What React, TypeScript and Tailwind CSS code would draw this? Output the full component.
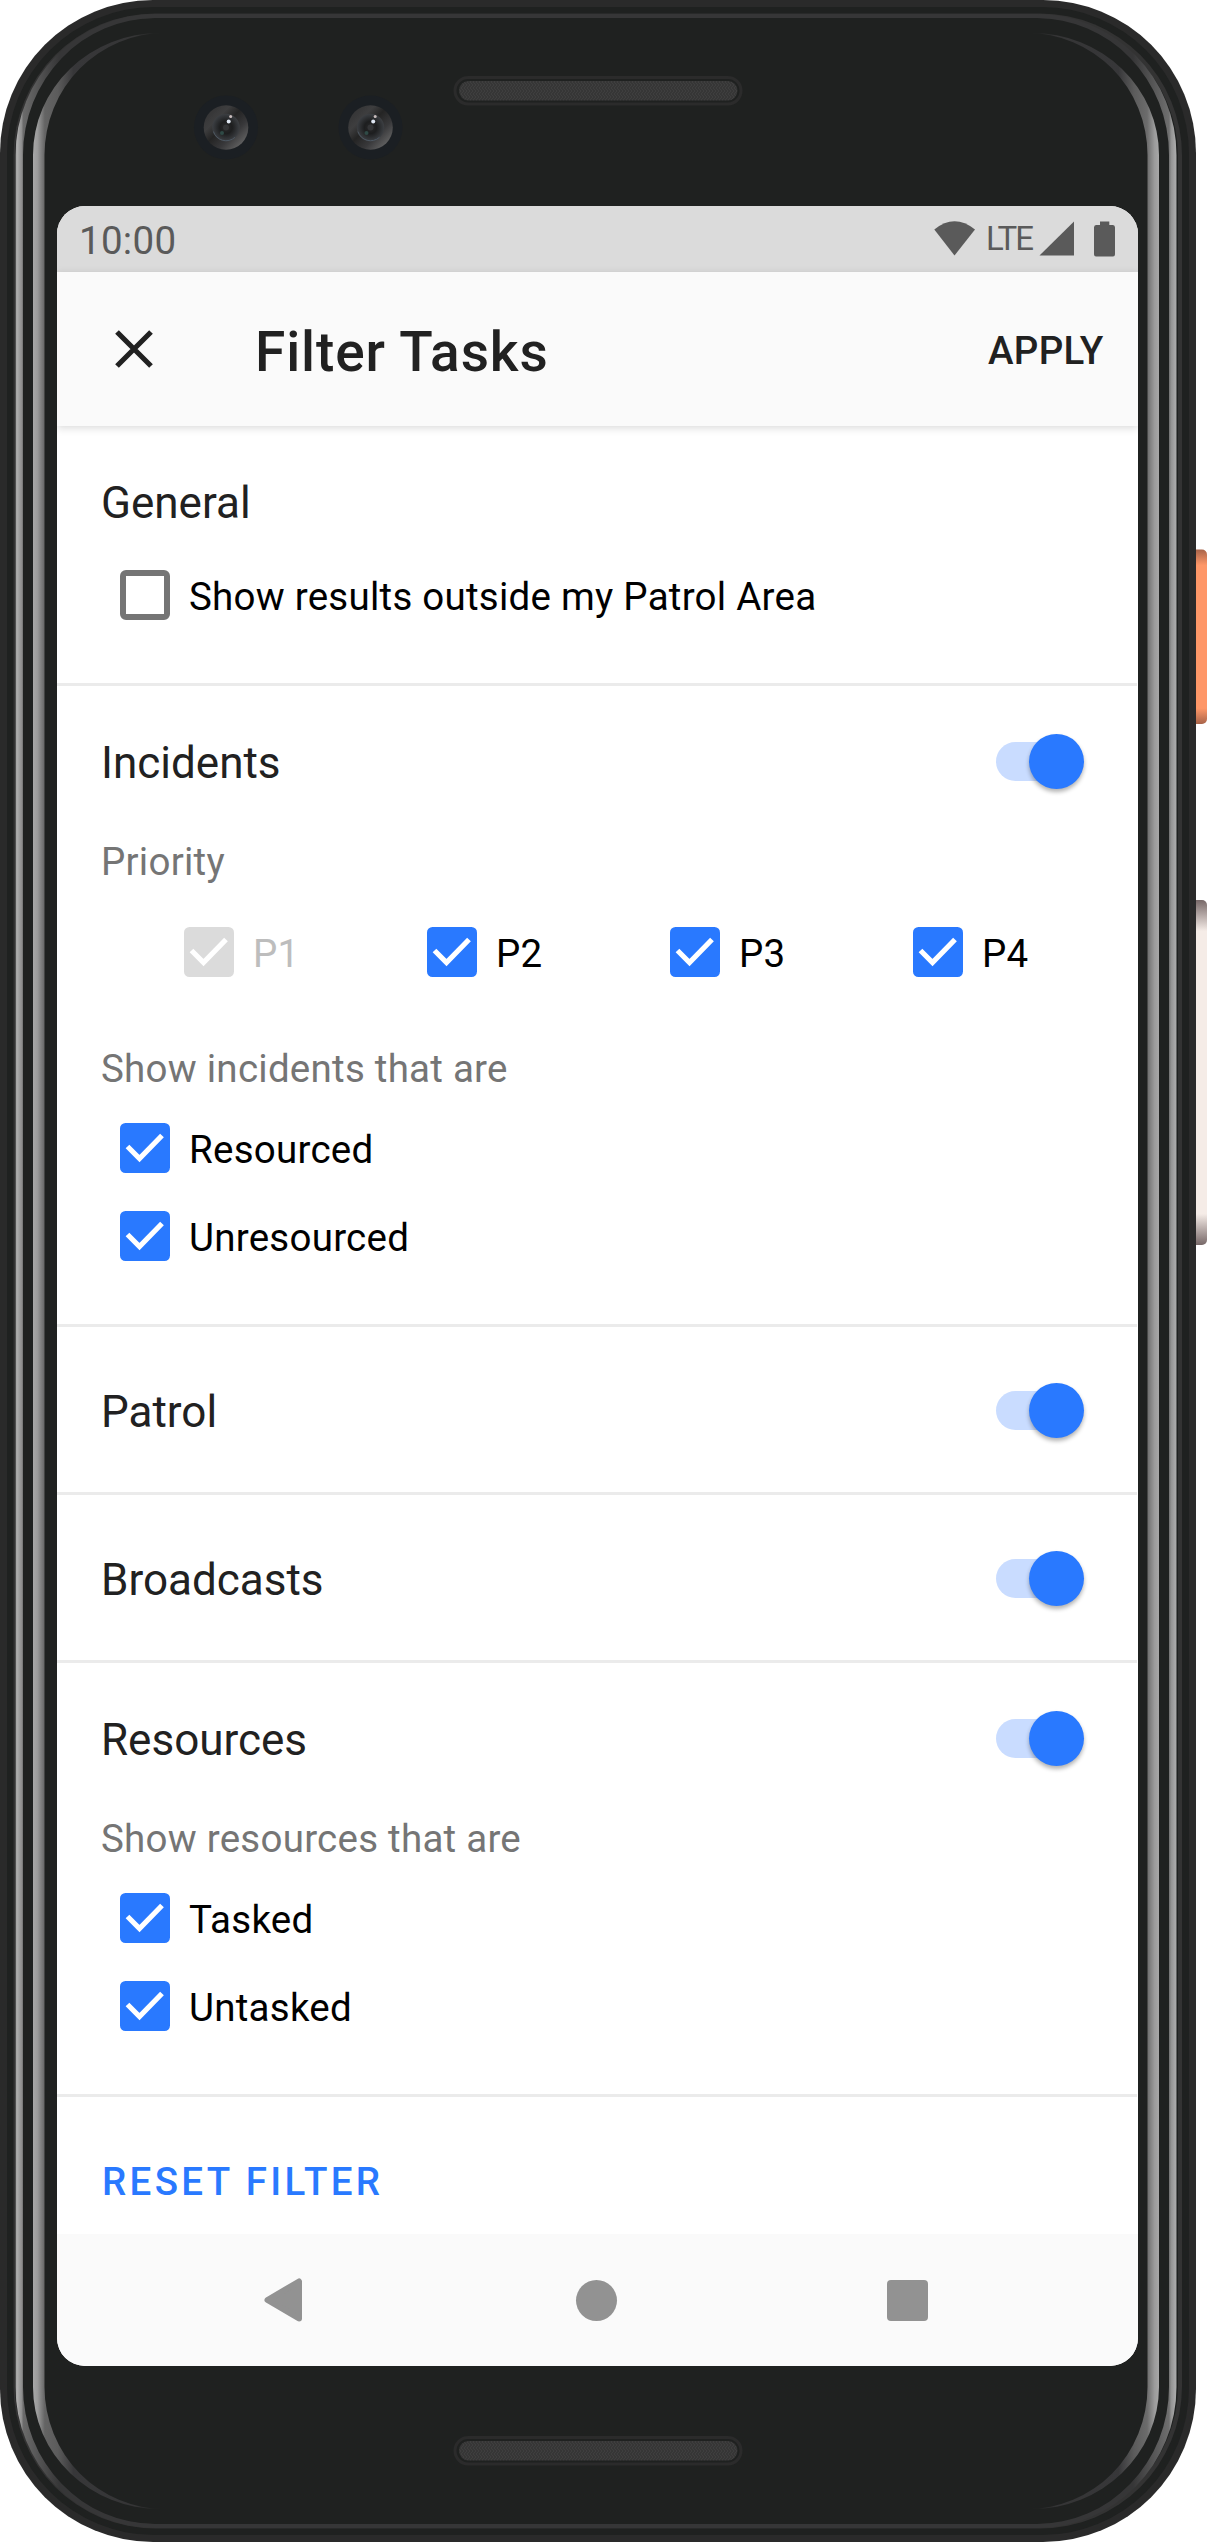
import React from "react";

const SANS = "font-['Roboto',sans-serif]";

function Camera({ cx, cy }: { cx: number; cy: number }) {
  return (
    <g transform={`translate(${cx} ${cy})`}>
      <circle r="32" fill="#1b1f23" />
      <circle r="22.3" fill="url(#camRim)" />
      <circle r="13.7" fill="url(#camLens)" />
      <path d="M-12.6 4 A13.3 13.3 0 0 0 9 9.8" fill="none" stroke="#4d5761" strokeWidth="1" />
      <circle r="3" fill="#333436" />
      <circle cx="-4" cy="5.5" r="2" fill="#2f4a46" />
      <circle cx="2.7" cy="-6" r="2" fill="#dfe6f2" />
      <circle cx="4.7" cy="-11" r="1.5" fill="#c9bdbd" />
    </g>
  );
}

function Speaker({ y }: { y: number }) {
  return (
    <g transform={`translate(453.5 ${y})`}>
      <rect x="1.5" y="1.5" width="286" height="26.5" rx="13.2" fill="none" stroke="#2b2b2b" strokeWidth="3" />
      <rect x="5.5" y="5" width="278.5" height="19.5" rx="9.7" fill="url(#mesh)" />
    </g>
  );
}

function DeviceFrame() {
  return (
    <svg className="absolute inset-0" width="1207" height="2542" viewBox="0 0 1207 2542">
      <defs>
        <linearGradient id="outerRing" gradientUnits="userSpaceOnUse" x1="15" y1="0" x2="1177" y2="0">
          <stop offset="0" stopColor="#6c6c6c" />
          <stop offset="0.0015" stopColor="#b0b0b0" />
          <stop offset="0.006" stopColor="#8c8c8c" />
          <stop offset="0.0069" stopColor="#6b6b6b" />
          <stop offset="0.038" stopColor="#363637" />
          <stop offset="0.962" stopColor="#363637" />
          <stop offset="0.9931" stopColor="#6f6f6f" />
          <stop offset="0.995" stopColor="#939393" />
          <stop offset="0.9985" stopColor="#aaaaaa" />
          <stop offset="1" stopColor="#a0a0a0" />
        </linearGradient>
        <linearGradient id="innerRing" gradientUnits="userSpaceOnUse" x1="33" y1="0" x2="1159" y2="0">
          <stop offset="0" stopColor="#a8a8a8" />
          <stop offset="0.004" stopColor="#9b9b9b" />
          <stop offset="0.0105" stopColor="#646464" />
          <stop offset="0.022" stopColor="#5c5c5c" />
          <stop offset="0.036" stopColor="#373739" />
          <stop offset="0.09" stopColor="#353536" />
          <stop offset="0.115" stopColor="#1f2120" />
          <stop offset="0.885" stopColor="#1f2120" />
          <stop offset="0.91" stopColor="#353536" />
          <stop offset="0.964" stopColor="#373739" />
          <stop offset="0.978" stopColor="#5c5c5c" />
          <stop offset="0.9895" stopColor="#6c6c6c" />
          <stop offset="0.996" stopColor="#9b9b9b" />
          <stop offset="1" stopColor="#a8a8a8" />
        </linearGradient>
        <linearGradient id="power" x1="0" y1="0" x2="0" y2="1">
          <stop offset="0" stopColor="#a8644a" />
          <stop offset="0.09" stopColor="#fe9768" />
          <stop offset="0.91" stopColor="#fe9768" />
          <stop offset="1" stopColor="#a8644a" />
        </linearGradient>
        <linearGradient id="volume" x1="0" y1="0" x2="0" y2="1">
          <stop offset="0" stopColor="#776868" />
          <stop offset="0.09" stopColor="#f5ece7" />
          <stop offset="0.91" stopColor="#f5ece7" />
          <stop offset="1" stopColor="#776868" />
        </linearGradient>
        <linearGradient id="camRim" x1="0.1" y1="0.1" x2="0.9" y2="0.9">
          <stop offset="0" stopColor="#333334" />
          <stop offset="0.25" stopColor="#3e3e3f" />
          <stop offset="0.45" stopColor="#242424" />
          <stop offset="0.7" stopColor="#38383a" />
          <stop offset="1" stopColor="#676767" />
        </linearGradient>
        <radialGradient id="camLens">
          <stop offset="0" stopColor="#2a2a2b" />
          <stop offset="0.45" stopColor="#1d1e1f" />
          <stop offset="1" stopColor="#3c3f43" />
        </radialGradient>
        <pattern id="mesh" width="3" height="6" patternUnits="userSpaceOnUse">
          <rect width="3" height="6" fill="#2c2c2c" />
          <path d="M-1.5 0 L1.5 3 L-1.5 6 M1.5 0 L4.5 3 L1.5 6" fill="none" stroke="#575757" strokeWidth="0.9" />
        </pattern>
      </defs>
      <rect x="1190" y="549.5" width="17" height="174.5" rx="5" fill="url(#power)" />
      <rect x="1190" y="900" width="17" height="345" rx="5" fill="url(#volume)" />
      <rect width="1196" height="2542" rx="153" fill="#2a2a2a" />
      <rect x="7" y="7" width="1182" height="2528" rx="147" fill="#1f2120" />
      <rect x="13.5" y="13.5" width="1168.5" height="2515" rx="142" fill="#333333" />
      <rect x="15" y="18" width="1163" height="2506" rx="138" fill="#1f2120" />
      <path
        fillRule="evenodd"
        fill="url(#outerRing)"
        d="M155 14H1037A140 141 0 0 1 1176.5 155V2387A140 141 0 0 1 1037 2528H155A140 141 0 0 1 15.5 2387V155A140 141 0 0 1 155 14Z M155 18A132 137 0 0 0 23 155V2387A132 137 0 0 0 155 2524H1037A132 137 0 0 0 1169 2387V155A132 137 0 0 0 1037 18Z"
      />
      <path
        fillRule="evenodd"
        fill="url(#innerRing)"
        d="M160 33H1032A127 122 0 0 1 1159 155V2387A127 122 0 0 1 1032 2509H160A127 122 0 0 1 33 2387V155A127 122 0 0 1 160 33Z M165 33A120 122 0 0 0 44.5 155V2387A120 122 0 0 0 165 2509H1027A120 122 0 0 0 1147.5 2387V155A120 122 0 0 0 1027 33Z"
      />
      <Camera cx={226} cy={127.5} />
      <Camera cx={370.5} cy={127.5} />
      <Speaker y={76} />
      <Speaker y={2436} />
    </svg>
  );
}

function Checkbox({ label, state = "on" }: { label: string; state?: "on" | "off" | "disabled" }) {
  const fill = state === "disabled" ? "#dbdbdb" : "#2979ff";
  return (
    <label className="flex h-[50px] items-center">
      <svg width="50" height="50" viewBox="0 0 50 50" className="shrink-0">
        {state === "off" ? (
          <rect x="3" y="3" width="44" height="44" rx="3" fill="none" stroke="#757575" strokeWidth="6" />
        ) : (
          <>
            <rect width="50" height="50" rx="5.5" fill={fill} />
            <path d="M7.5 23.5 L19.5 35.5 L42 12.5" fill="none" stroke="#fff" strokeWidth="5.2" />
          </>
        )}
      </svg>
      <span
        className={
          "relative top-[2px] ml-[19px] text-[38.5px] leading-[50px] tracking-[0.25px] whitespace-nowrap " +
          (state === "disabled" ? "text-[#bdbdbd]" : "text-black")
        }
      >
        {label}
      </span>
    </label>
  );
}

function Switch() {
  return (
    <span className="relative block h-[55px] w-[88px]">
      <span className="absolute top-2 left-0 h-[39px] w-[77px] rounded-full bg-[#c9dcff]" />
      <span className="absolute top-0 right-0 size-[55px] rounded-full bg-[#2979ff] shadow-[0_3px_4px_rgba(0,0,0,0.3)]" />
    </span>
  );
}

function Heading({ title, toggle = true }: { title: string; toggle?: boolean }) {
  return (
    <div className="flex h-[55px] items-center justify-between pr-[53px]">
      <h2 className="relative top-[2px] text-[44px] leading-[55px] text-[#212121]">{title}</h2>
      {toggle && <Switch />}
    </div>
  );
}

function Caption({ text }: { text: string }) {
  return <p className="relative top-px text-[38.5px] leading-[46px] tracking-[0.25px] text-[#757575]">{text}</p>;
}

const section = "mr-px border-b-3 border-[#ebebeb] pl-11";

export default function App() {
  return (
    <div className={`relative h-[2542px] w-[1207px] overflow-hidden bg-white ${SANS}`}>
      <DeviceFrame />
      <div className="relative pt-[206px] pl-[57px]">
        <div className="flex h-[2160px] w-[1080.5px] flex-col overflow-hidden rounded-[28px] bg-white">
          <div className="flex h-[66px] shrink-0 items-center justify-between bg-[#dbdbdb] pr-[20.5px] pl-[22px] text-[#5a5a5a]">
            <span className="relative top-[2px] text-[38.5px] leading-none tracking-[0.3px]">10:00</span>
            <svg width="183" height="40" viewBox="934 219 183 40" fill="#5a5a5a">
              <path d="M934.3 229.5 Q954.5 213 975 229.5 L954.5 255.5 Z" />
              <text x="986" y="250" fontSize="33" textLength="48">LTE</text>
              <path d="M1039.5 255.5 L1074 221.5 V255.5 Z" />
              <path d="M1100 221.5 H1109.3 V225 H1113 Q1115 225 1115 227.5 V254 Q1115 256.5 1113 256.5 H1096 Q1094 256.5 1094 254 V227.5 Q1094 225 1096 225 H1100 Z" />
            </svg>
          </div>

          <header className="relative z-10 flex h-[154px] shrink-0 items-center bg-[#fafafa] pr-[34px] pl-[58px] shadow-[0_2px_8px_rgba(0,0,0,0.15)]">
            <svg width="38" height="38" viewBox="0 0 38 38" stroke="#212121" strokeWidth="5.2">
              <path d="M2 2 L36 36 M36 2 L2 36" />
            </svg>
            <h1 className="relative top-[3px] ml-[102px] flex-1 text-[55px] leading-none font-medium tracking-[0.9px] text-[#212121]">
              Filter Tasks
            </h1>
            <button className="relative top-[2px] text-[38.5px] leading-none font-medium tracking-[0.25px] text-[#212121]">
              APPLY
            </button>
          </header>

          <main className="flex-1">
            <section className={`${section} h-[260px] pt-[48px]`}>
              <Heading title="General" toggle={false} />
              <div className="mt-[41px] pl-[19px]">
                <Checkbox label="Show results outside my Patrol Area" state="off" />
              </div>
            </section>

            <section className={`${section} h-[641px] pt-[48px]`}>
              <Heading title="Incidents" />
              <div className="mt-[49px]">
                <Caption text="Priority" />
              </div>
              <div className="mt-[43px] grid grid-cols-[repeat(4,243px)] pl-[83px]">
                <Checkbox label="P1" state="disabled" />
                <Checkbox label="P2" />
                <Checkbox label="P3" />
                <Checkbox label="P4" />
              </div>
              <div className="mt-[68px]">
                <Caption text="Show incidents that are" />
              </div>
              <div className="mt-[32px] flex flex-col gap-[38px] pl-[19px]">
                <Checkbox label="Resourced" />
                <Checkbox label="Unresourced" />
              </div>
            </section>

            <section className={`${section} h-[168px] pt-[56px]`}>
              <Heading title="Patrol" />
            </section>
            <section className={`${section} h-[168px] pt-[56px]`}>
              <Heading title="Broadcasts" />
            </section>

            <section className={`${section} h-[434px] pt-[48px]`}>
              <Heading title="Resources" />
              <div className="mt-[49px]">
                <Caption text="Show resources that are" />
              </div>
              <div className="mt-[32px] flex flex-col gap-[38px] pl-[19px]">
                <Checkbox label="Tasked" />
                <Checkbox label="Untasked" />
              </div>
            </section>

            <div className="pt-[62px] pl-[45px]">
              <button className="text-[38.5px] leading-[46px] font-medium tracking-[3.35px] text-[#2979ff]">RESET FILTER</button>
            </div>
          </main>

          <nav className="flex h-[132px] shrink-0 items-center bg-[#fafafa] pl-[206px]">
            <svg width="40" height="46" viewBox="0 0 40 46" fill="#929292" stroke="#929292" strokeWidth="6" strokeLinejoin="round">
              <path d="M4.5 23 L36 4.5 V41.5 Z" />
            </svg>
            <span className="ml-[273px] size-[41px] rounded-full bg-[#929292]" />
            <span className="ml-[270px] size-[41px] rounded-[4px] bg-[#929292]" />
          </nav>
        </div>
      </div>
    </div>
  );
}
